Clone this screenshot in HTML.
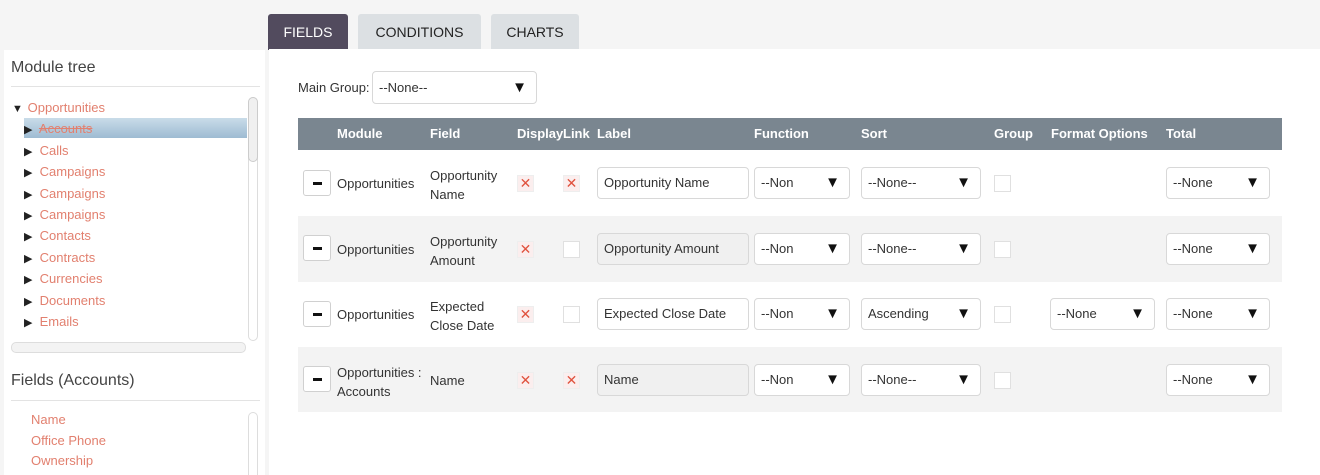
<!DOCTYPE html>
<html><head><style>
*{box-sizing:border-box;margin:0;padding:0}
html,body{width:1320px;height:475px;overflow:hidden}
body{background:#f5f5f5;font-family:"Liberation Sans",sans-serif;font-size:13px;color:#333;position:relative}
.a{position:absolute}
.tab{position:absolute;top:14px;height:36px;line-height:36px;text-align:center;font-size:14px;background:#dce0e3;color:#222;border-radius:3px 3px 0 0}
.lnk{color:#e2806f}
.ti{height:21.4px;line-height:21.4px;white-space:nowrap;font-size:13px}
.tri{display:inline-block;width:12px;font-size:11px;color:#222;line-height:10px}
.inp{position:absolute;height:32px;border:1px solid #d8d8d8;border-radius:4px;background:#fff;line-height:30px;padding-left:6px;font-size:13px;color:#333;white-space:nowrap;overflow:hidden}
.sel::after{content:"▼";position:absolute;right:9px;top:0;font-size:15px;color:#111}
.btn{position:absolute;width:28px;height:26px;border:1px solid #d0d0d0;border-radius:3px;background:#fff}
.btn::after{content:"";position:absolute;left:9px;top:11px;width:9px;height:3px;background:#111}
.cb{position:absolute;width:17px;height:17px;border:1px solid #e0e0e0;background:#fff}
.cbx{position:absolute;width:17px;height:17px;border:1px solid #eee;background:#fbeeee;color:#e0533f;font-size:14px;line-height:15px;text-align:center}
.row{position:absolute;left:298px;width:984px}
.th{position:absolute;top:126px;color:#fff;font-weight:bold;font-size:13px}
</style></head><body>
<div class="tab" style="left:268px;width:80px;background:#524b5e;color:#fff">FIELDS</div>
<div class="tab" style="left:358px;width:123px">CONDITIONS</div>
<div class="tab" style="left:491px;width:88px">CHARTS</div>

<div class="a" style="left:4px;top:50px;width:261px;height:425px;background:#fff"></div>
<div class="a" style="left:269px;top:49px;width:1051px;height:426px;background:#fff"></div>

<div class="a" style="left:11px;top:59px;font-size:16px;color:#444">Module tree</div>
<div class="a" style="left:11px;top:86px;width:249px;height:1px;background:#e3e3e3"></div>
<div class="a" style="left:24px;top:118px;width:223px;height:20px;background:linear-gradient(#c9dce9,#9ebbd2)"></div>
<div class="a" style="left:12px;top:97px;width:236px;height:240px;overflow:hidden">
<div class="ti"><span class="tri">▼</span> <span class="lnk">Opportunities</span></div>
<div style="padding-left:12px">
<div class="ti"><span class="tri">▶</span> <span class="lnk" style="text-decoration:line-through">Accounts</span></div>
<div class="ti"><span class="tri">▶</span> <span class="lnk">Calls</span></div>
<div class="ti"><span class="tri">▶</span> <span class="lnk">Campaigns</span></div>
<div class="ti"><span class="tri">▶</span> <span class="lnk">Campaigns</span></div>
<div class="ti"><span class="tri">▶</span> <span class="lnk">Campaigns</span></div>
<div class="ti"><span class="tri">▶</span> <span class="lnk">Contacts</span></div>
<div class="ti"><span class="tri">▶</span> <span class="lnk">Contracts</span></div>
<div class="ti"><span class="tri">▶</span> <span class="lnk">Currencies</span></div>
<div class="ti"><span class="tri">▶</span> <span class="lnk">Documents</span></div>
<div class="ti"><span class="tri">▶</span> <span class="lnk">Emails</span></div>
<div class="ti"><span class="tri">▶</span> <span class="lnk">Leads</span></div>
</div></div>
<div class="a" style="left:248px;top:97px;width:10px;height:244px;border:1px solid #ddd;border-radius:5px;background:#fff"></div>
<div class="a" style="left:248px;top:97px;width:10px;height:65px;border:1px solid #ccc;border-radius:5px;background:#f0f0f0"></div>
<div class="a" style="left:11px;top:342px;width:235px;height:11px;border:1px solid #ddd;border-radius:5px;background:#f3f3f3"></div>
<div class="a" style="left:11px;top:372px;font-size:16px;color:#444">Fields (Accounts)</div>
<div class="a" style="left:11px;top:400px;width:249px;height:1px;background:#e3e3e3"></div>
<div class="a" style="left:248px;top:412px;width:10px;height:70px;border:1px solid #ddd;border-radius:5px;background:#fff"></div>
<div class="a lnk" style="left:31px;top:410px;line-height:20.5px"><div>Name</div><div>Office Phone</div><div>Ownership</div></div>

<div class="a" style="left:298px;top:80px">Main Group:</div>
<div class="inp sel" style="left:372px;top:71px;width:165px;height:33px;line-height:31px">--None--</div>

<div class="a" style="left:298px;top:118px;width:984px;height:32px;background:#7a8690"></div>
<div class="th" style="left:337px">Module</div><div class="th" style="left:430px">Field</div><div class="th" style="left:517px">Display</div><div class="th" style="left:563px">Link</div><div class="th" style="left:597px">Label</div><div class="th" style="left:754px">Function</div><div class="th" style="left:861px">Sort</div><div class="th" style="left:994px">Group</div><div class="th" style="left:1051px">Format Options</div><div class="th" style="left:1166px">Total</div>

<div class="row" style="top:216px;height:66px;background:#f3f3f3"></div>
<div class="row" style="top:347px;height:65px;background:#f3f3f3"></div>

<div class="btn" style="left:303px;top:170px"></div>
<div class="a" style="left:337px;top:176px">Opportunities</div>
<div class="a" style="left:430px;top:166px;line-height:19px">Opportunity<br>Name</div>
<div class="cbx" style="left:517px;top:175px">✕</div><div class="cbx" style="left:563px;top:175px">✕</div>
<div class="inp" style="left:597px;top:167px;width:152px">Opportunity Name</div>
<div class="inp sel" style="left:754px;top:167px;width:96px">--Non</div>
<div class="inp sel" style="left:861px;top:167px;width:120px">--None--</div>
<div class="cb" style="left:994px;top:175px"></div>
<div class="inp sel" style="left:1166px;top:167px;width:104px">--None</div>

<div class="btn" style="left:303px;top:235px"></div>
<div class="a" style="left:337px;top:242px">Opportunities</div>
<div class="a" style="left:430px;top:232px;line-height:19px">Opportunity<br>Amount</div>
<div class="cbx" style="left:517px;top:241px">✕</div><div class="cb" style="left:563px;top:241px"></div>
<div class="inp" style="left:597px;top:233px;width:152px;background:#f0f0f0">Opportunity Amount</div>
<div class="inp sel" style="left:754px;top:233px;width:96px">--Non</div>
<div class="inp sel" style="left:861px;top:233px;width:120px">--None--</div>
<div class="cb" style="left:994px;top:241px"></div>
<div class="inp sel" style="left:1166px;top:233px;width:104px">--None</div>

<div class="btn" style="left:303px;top:301px"></div>
<div class="a" style="left:337px;top:307px">Opportunities</div>
<div class="a" style="left:430px;top:297px;line-height:19px">Expected<br>Close Date</div>
<div class="cbx" style="left:517px;top:306px">✕</div><div class="cb" style="left:563px;top:306px"></div>
<div class="inp" style="left:597px;top:298px;width:152px">Expected Close Date</div>
<div class="inp sel" style="left:754px;top:298px;width:96px">--Non</div>
<div class="inp sel" style="left:861px;top:298px;width:120px">Ascending</div>
<div class="cb" style="left:994px;top:306px"></div>
<div class="inp sel" style="left:1050px;top:298px;width:105px">--None</div>
<div class="inp sel" style="left:1166px;top:298px;width:104px">--None</div>

<div class="btn" style="left:303px;top:366px"></div>
<div class="a" style="left:337px;top:363px;line-height:19px">Opportunities :<br>Accounts</div>
<div class="a" style="left:430px;top:373px">Name</div>
<div class="cbx" style="left:517px;top:372px">✕</div><div class="cbx" style="left:563px;top:372px">✕</div>
<div class="inp" style="left:597px;top:364px;width:152px;background:#f0f0f0">Name</div>
<div class="inp sel" style="left:754px;top:364px;width:96px">--Non</div>
<div class="inp sel" style="left:861px;top:364px;width:120px">--None--</div>
<div class="cb" style="left:994px;top:372px"></div>
<div class="inp sel" style="left:1166px;top:364px;width:104px">--None</div>
</body></html>
